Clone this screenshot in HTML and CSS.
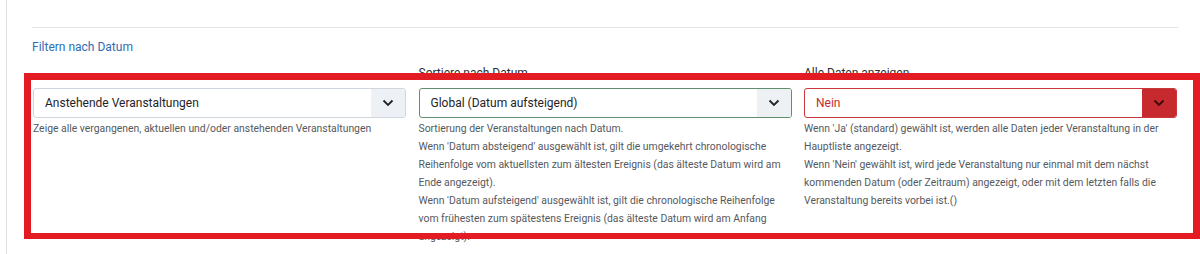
FILE: index.html
```html
<!DOCTYPE html>
<html lang="de">
<head>
<meta charset="utf-8">
<title>Filtern nach Datum</title>
<link rel="stylesheet" href="styles.css">
</head>
<body>
<div class="frame">
  <div class="content">
    <hr class="sep">
    <div class="legend">Filtern nach Datum</div>
    <div class="fields">
      <div class="field">
        <div class="label">&nbsp;</div>
        <div class="select">
          <span class="value">Anstehende Veranstaltungen</span>
          <span class="arrow"><svg width="12" height="8" viewBox="0 0 12 8"><path d="M1.5 1.5 L6 6 L10.5 1.5" fill="none" stroke="#1f2327" stroke-width="1.8"/></svg></span>
        </div>
        <div class="desc">Zeige alle vergangenen, aktuellen und/oder anstehenden Veranstaltungen</div>
      </div>
      <div class="field">
        <div class="label">Sortiere nach Datum</div>
        <div class="select valid">
          <span class="value">Global (Datum aufsteigend)</span>
          <span class="arrow"><svg width="12" height="8" viewBox="0 0 12 8"><path d="M1.5 1.5 L6 6 L10.5 1.5" fill="none" stroke="#1f2327" stroke-width="1.8"/></svg></span>
        </div>
        <div class="desc">Sortierung der Veranstaltungen nach Datum.<br>Wenn 'Datum absteigend' ausgewählt ist, gilt die umgekehrt chronologische Reihenfolge vom aktuellsten zum ältesten Ereignis (das älteste Datum wird am Ende angezeigt).<br>Wenn 'Datum aufsteigend' ausgewählt ist, gilt die chronologische Reihenfolge vom frühesten zum spätestens Ereignis (das älteste Datum wird am Anfang angezeigt).</div>
      </div>
      <div class="field">
        <div class="label">Alle Daten anzeigen</div>
        <div class="select invalid">
          <span class="value">Nein</span>
          <span class="arrow"><svg width="12" height="8" viewBox="0 0 12 8"><path d="M1.5 1.5 L6 6 L10.5 1.5" fill="none" stroke="#3a0a0a" stroke-width="1.8"/></svg></span>
        </div>
        <div class="desc">Wenn 'Ja' (standard) gewählt ist, werden alle Daten jeder Veranstaltung in der Hauptliste angezeigt.<br>Wenn 'Nein' gewählt ist, wird jede Veranstaltung nur einmal mit dem nächst kommenden Datum (oder Zeitraum) angezeigt, oder mit dem letzten falls die Veranstaltung bereits vorbei ist.()</div>
      </div>
    </div>
  </div>
  <div class="highlight"></div>
</div>
</body>
</html>
```
FILE: styles.css
```css
html, body {
  margin: 0;
  padding: 0;
  background: #ffffff;
  font-family: Roboto, "Liberation Sans", Arial, sans-serif;
  overflow: hidden;
}

.frame {
  margin-left: 6px;
  border-left: 1px solid #dce1e6;
  height: 254px;
  box-sizing: border-box;
  padding: 27px 0 0 25px;
}

.content {
  width: 1146px;
}

.sep {
  border: 0;
  border-top: 1px solid #e2e4e7;
  margin: 0;
  height: 0;
}

.legend {
  margin-top: 10px;
  font-size: 12px;
  line-height: 18px;
  color: #2f6cb3;
}

.fields {
  display: grid;
  grid-template-columns: repeat(3, 373px);
  column-gap: 12.5px;
  margin: 8px 1px 0 1px;
}

.label {
  font-size: 12px;
  line-height: 18px;
  color: #2a2e33;
  margin-bottom: 6px;
}

.select {
  display: flex;
  height: 30px;
  box-sizing: border-box;
  border: 1px solid #cfd6de;
  border-radius: 3px;
  overflow: hidden;
  font-size: 12px;
  color: #1f2327;
}

.select .value {
  flex: 1;
  display: flex;
  align-items: center;
  padding-left: 11px;
}

.select .arrow {
  width: 34px;
  display: flex;
  align-items: center;
  justify-content: center;
  background: #edf1f6;
}

.select.valid {
  border-color: #5f8f6e;
}

.select.valid .arrow {
  background: #eef1f4;
}

.select.invalid {
  border-color: #c9373b;
  color: #c42b2f;
}

.select.invalid .arrow {
  background: #c62a2e;
}

.desc {
  margin-top: 2px;
  font-size: 10.4px;
  line-height: 18px;
  color: #55595e;
}

.highlight {
  position: absolute;
  left: 24px;
  top: 73px;
  width: 1176px;
  height: 166px;
  box-sizing: border-box;
  border: 7px solid #e31b22;
  border-bottom-width: 6px;
  pointer-events: none;
}
```
